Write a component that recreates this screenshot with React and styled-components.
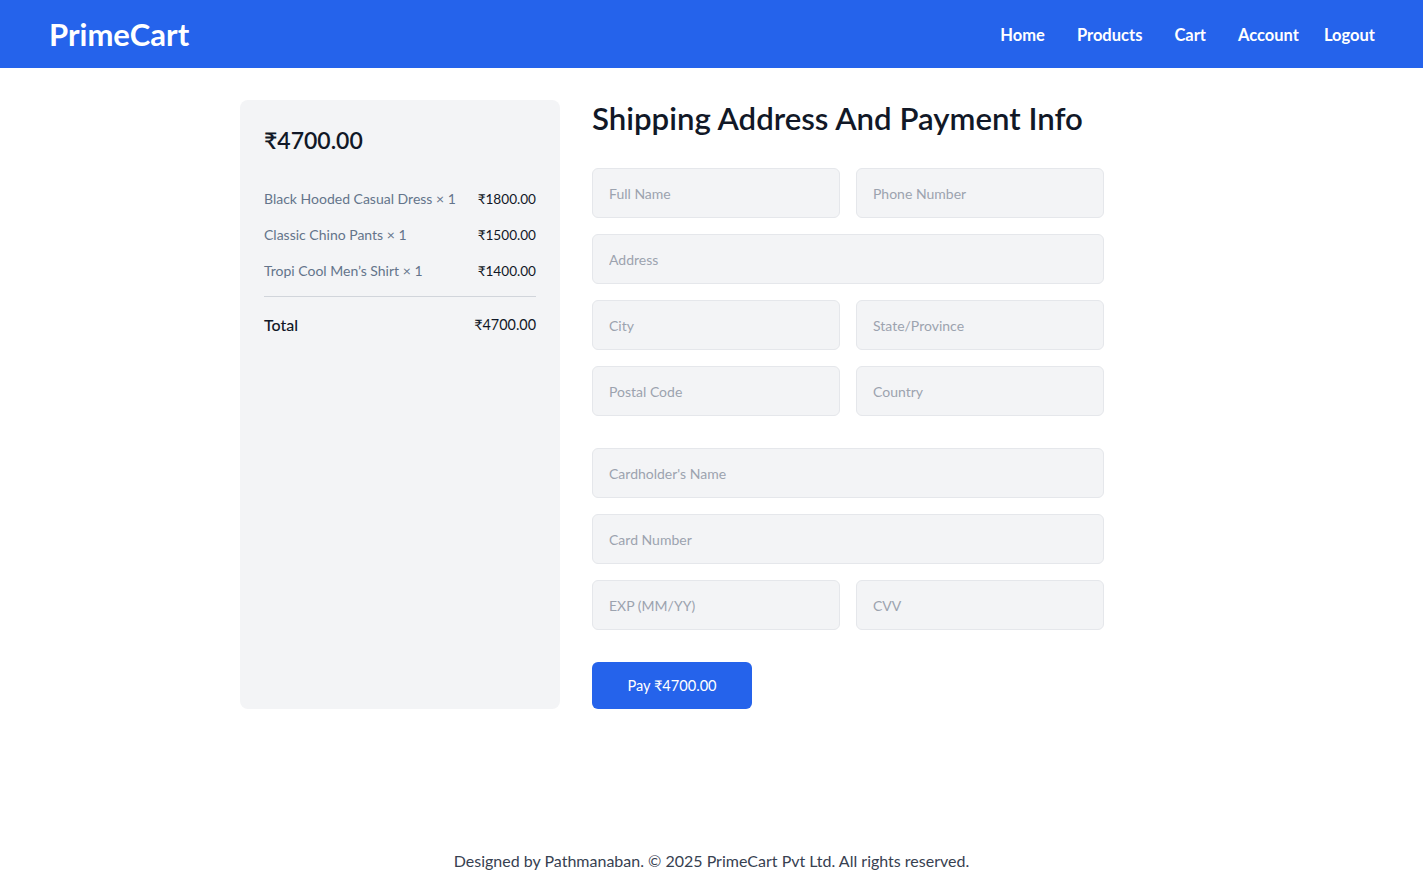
import React from 'react'
import styled, { createGlobalStyle } from 'styled-components'

const GlobalStyle = createGlobalStyle`
  * { box-sizing: border-box; }
  body {
    margin: 0;
    font-family: Lato, "Noto Sans", sans-serif;
    color: #111827;
    background: #ffffff;
  }
`

const Page = styled.div`
  min-height: 100vh;
  display: flex;
  flex-direction: column;
`

const Header = styled.header`
  height: 68px;
  background: #2563eb;
  display: flex;
  align-items: center;
  justify-content: space-between;
  padding: 0 48px 0 49px;
`

const Logo = styled.div`
  color: #ffffff;
  font-size: 31px;
  font-weight: 700;
`

const Nav = styled.nav`
  display: flex;
  align-items: center;
  gap: 32px;
  padding-top: 2px;
`

const NavLink = styled.a`
  color: #ffffff;
  font-size: 16.5px;
  font-weight: 700;
  text-decoration: none;
  margin-left: ${p => (p.$tight ? '-7px' : '0')};
`

const Main = styled.main`
  display: flex;
  gap: 32px;
  padding: 32px 40px 0 240px;
  align-items: stretch;
`

const Summary = styled.aside`
  width: 320px;
  background: #f3f4f6;
  border-radius: 8px;
  padding: 24px;
`

const SummaryTotal = styled.h2`
  margin: 0 0 33px;
  font-size: 23px;
  line-height: 32px;
  font-weight: 600;
  color: #111827;
`

const ItemList = styled.ul`
  list-style: none;
  margin: 0;
  padding: 0 0 15px;
  display: flex;
  flex-direction: column;
  gap: 16px;
  border-bottom: 1px solid #d1d5db;
`

const Item = styled.li`
  display: flex;
  justify-content: space-between;
  font-size: 14px;
  line-height: 20px;
`

const ItemName = styled.span`
  color: #64748b;
`

const ItemPrice = styled.span`
  color: #111827;
  font-size: 13.6px;
`

const TotalRow = styled.div`
  display: flex;
  justify-content: space-between;
  padding-top: 16px;
  font-size: 16px;
  line-height: 24px;
  font-weight: 500;
`

const TotalPrice = styled.span`
  font-size: 14.4px;
  font-weight: 400;
`

const FormCol = styled.section`
  width: 512px;
`

const Title = styled.h1`
  margin: 0 0 32px;
  font-size: 31.2px;
  line-height: 36px;
  font-weight: 600;
  color: #111827;
  white-space: nowrap;
`

const Form = styled.form`
  display: flex;
  flex-direction: column;
`

const Group = styled.div`
  display: grid;
  gap: 16px;
  margin-bottom: ${p => p.$mb || 0}px;
`

const Row = styled.div`
  display: grid;
  grid-template-columns: ${p => (p.$split ? '1fr 1fr' : '1fr')};
  gap: 16px;
`

const Input = styled.input`
  height: 50px;
  width: 100%;
  padding: 0 16px;
  border: 1px solid #e5e7eb;
  border-radius: 6px;
  background: #f3f4f6;
  font-family: inherit;
  font-size: 14px;
  color: #111827;
  outline: none;
  &::placeholder {
    color: #9ca3af;
  }
`

const PayButton = styled.button`
  width: 160px;
  height: 47px;
  border: none;
  border-radius: 6px;
  background: #2563eb;
  color: #ffffff;
  font-family: inherit;
  font-size: 14.6px;
  cursor: pointer;
`

const Footer = styled.footer`
  margin-top: auto;
  text-align: center;
  padding: 14px 0;
  font-size: 16px;
  line-height: 24px;
  color: #374151;
`

const items = [
  { name: 'Black Hooded Casual Dress', qty: 1, price: '1800.00' },
  { name: 'Classic Chino Pants', qty: 1, price: '1500.00' },
  { name: 'Tropi Cool Men’s Shirt', qty: 1, price: '1400.00' },
]

export default function App() {
  return (
    <Page>
      <GlobalStyle />
      <Header>
        <Logo>PrimeCart</Logo>
        <Nav>
          <NavLink href="#">Home</NavLink>
          <NavLink href="#">Products</NavLink>
          <NavLink href="#">Cart</NavLink>
          <NavLink href="#">Account</NavLink>
          <NavLink href="#" $tight>Logout</NavLink>
        </Nav>
      </Header>
      <Main>
        <Summary>
          <SummaryTotal>₹4700.00</SummaryTotal>
          <ItemList>
            {items.map(it => (
              <Item key={it.name}>
                <ItemName>{it.name} × {it.qty}</ItemName>
                <ItemPrice>₹{it.price}</ItemPrice>
              </Item>
            ))}
          </ItemList>
          <TotalRow>
            <span>Total</span>
            <TotalPrice>₹4700.00</TotalPrice>
          </TotalRow>
        </Summary>
        <FormCol>
          <Title>Shipping Address And Payment Info</Title>
          <Form onSubmit={e => e.preventDefault()}>
            <Group $mb={32}>
              <Row $split>
                <Input placeholder="Full Name" />
                <Input placeholder="Phone Number" />
              </Row>
              <Row>
                <Input placeholder="Address" />
              </Row>
              <Row $split>
                <Input placeholder="City" />
                <Input placeholder="State/Province" />
              </Row>
              <Row $split>
                <Input placeholder="Postal Code" />
                <Input placeholder="Country" />
              </Row>
            </Group>
            <Group $mb={32}>
              <Row>
                <Input placeholder="Cardholder's Name" />
              </Row>
              <Row>
                <Input placeholder="Card Number" />
              </Row>
              <Row $split>
                <Input placeholder="EXP (MM/YY)" />
                <Input placeholder="CVV" />
              </Row>
            </Group>
            <div>
              <PayButton type="submit">Pay ₹4700.00</PayButton>
            </div>
          </Form>
        </FormCol>
      </Main>
      <Footer>Designed by Pathmanaban. © 2025 PrimeCart Pvt Ltd. All rights reserved.</Footer>
    </Page>
  )
}
